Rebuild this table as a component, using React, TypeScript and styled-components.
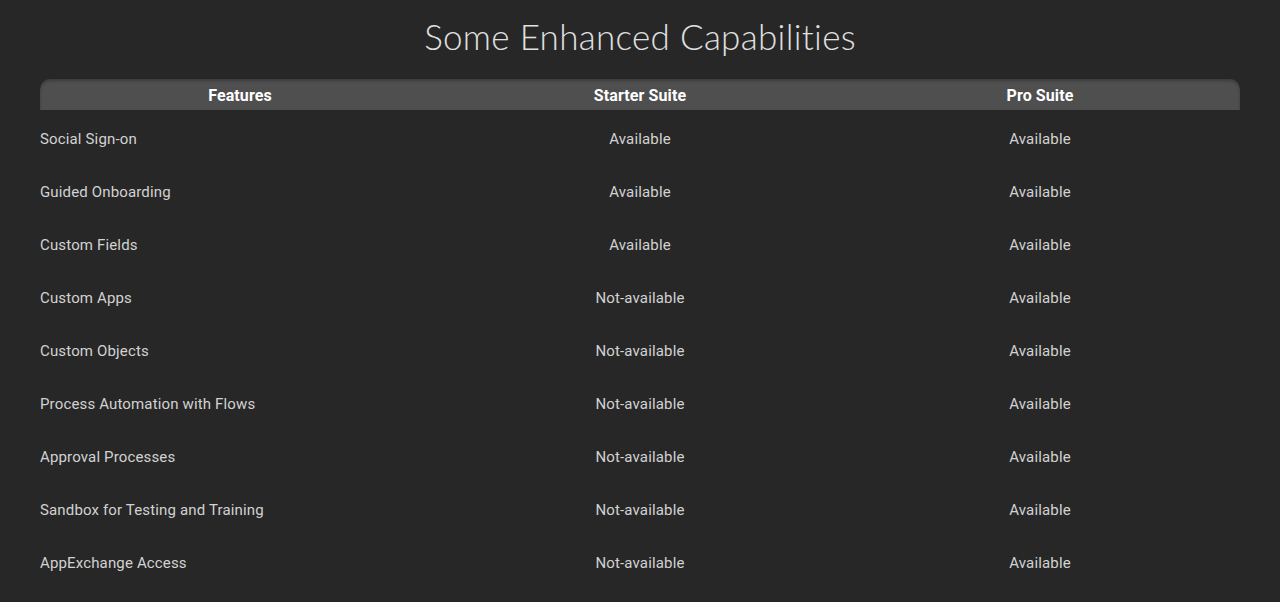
import React from "react";
import styled, { createGlobalStyle } from "styled-components";

const Global = createGlobalStyle`
  html, body {
    margin: 0;
    padding: 0;
    background: #272727;
  }
`;

const Page = styled.div`
  min-height: 602px;
  background: #272727;
  display: flex;
  flex-direction: column;
  align-items: center;
  padding: 0 40px;
  box-sizing: border-box;
`;

const Title = styled.h1`
  font-family: "Lato", "Open Sans", sans-serif;
  font-weight: 300;
  font-size: 35px;
  letter-spacing: 0.3px;
  color: #e0e0e0;
  margin: 14px 0 21px;
  line-height: 44px;
`;

const Table = styled.div`
  width: 100%;
  display: flex;
  flex-direction: column;
`;

const HeadRow = styled.div`
  display: grid;
  grid-template-columns: repeat(3, 1fr);
  height: 31px;
  background: #4f4f4f;
  border-radius: 10px 10px 0 0;
  box-shadow: inset 0 2px 3px rgba(0, 0, 0, 0.25);
`;

const HeadCell = styled.div`
  color: #ffffff;
  font-family: Roboto, "Liberation Sans", sans-serif;
  font-weight: 700;
  font-size: 16px;
  letter-spacing: 0.1px;
  display: flex;
  align-items: center;
  justify-content: center;
  padding-top: 1px;
`;

const Row = styled.div`
  display: grid;
  grid-template-columns: repeat(3, 1fr);
  height: 53px;
`;

const Cell = styled.div<{ $first?: boolean }>`
  display: flex;
  align-items: center;
  justify-content: ${(p) => (p.$first ? "flex-start" : "center")};
  font-family: Roboto, "Liberation Sans", sans-serif;
  font-size: 15px;
  letter-spacing: 0.15px;
  color: #d2d2d2;
  padding-top: 5px;
`;

const rows: [string, string, string][] = [
  ["Social Sign-on", "Available", "Available"],
  ["Guided Onboarding", "Available", "Available"],
  ["Custom Fields", "Available", "Available"],
  ["Custom Apps", "Not-available", "Available"],
  ["Custom Objects", "Not-available", "Available"],
  ["Process Automation with Flows", "Not-available", "Available"],
  ["Approval Processes", "Not-available", "Available"],
  ["Sandbox for Testing and Training", "Not-available", "Available"],
  ["AppExchange Access", "Not-available", "Available"],
];

const App = () => {
  return (
    <Page>
      <Global />
      <Title>Some Enhanced Capabilities</Title>
      <Table>
        <HeadRow>
          <HeadCell>Features</HeadCell>
          <HeadCell>Starter Suite</HeadCell>
          <HeadCell>Pro Suite</HeadCell>
        </HeadRow>
        {rows.map((r) => (
          <Row key={r[0]}>
            <Cell $first>{r[0]}</Cell>
            <Cell>{r[1]}</Cell>
            <Cell>{r[2]}</Cell>
          </Row>
        ))}
      </Table>
    </Page>
  );
};

export default App;
